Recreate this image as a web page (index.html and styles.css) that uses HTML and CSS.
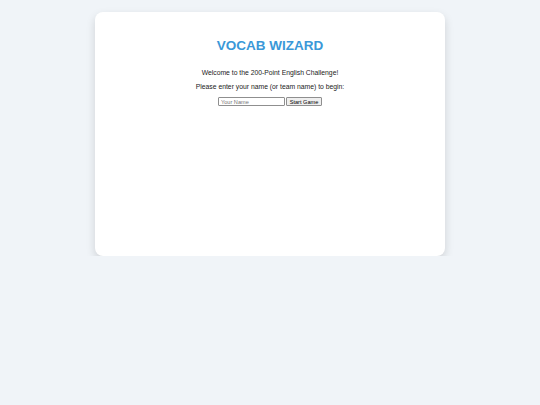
FILE: index.html
```html
<!DOCTYPE html>
<html>
<head>
<meta charset="utf-8">
<link rel="stylesheet" href="styles.css">
</head>
<body>
<div class="card">
  <h1 class="title">VOCAB WIZARD</h1>
  <p class="line">Welcome to the 200-Point English Challenge!</p>
  <p class="line">Please enter your name (or team name) to begin:</p>
  <div class="form">
    <input class="name" type="text" placeholder="Your Name">
    <button class="start">Start Game</button>
  </div>
</div>
</body>
</html>
```
FILE: styles.css
```css
html, body {
  margin: 0;
  padding: 0;
}
body {
  background: #f0f4f8;
  font-family: "Liberation Sans", Arial, sans-serif;
  color: #333;
  padding-top: 12px;
}
.card {
  width: 350px;
  height: 244px;
  box-sizing: border-box;
  margin: 0 auto;
  background: #fff;
  border-radius: 8px;
  box-shadow: 0 4px 10px rgba(0, 0, 0, 0.14);
  padding: 25px 10px 10px;
  text-align: center;
}
.title {
  margin: 0 0 14px;
  font-size: 13.5px;
  line-height: 18px;
  color: #3a98d8;
  font-weight: bold;
}
.line {
  margin: 0 0 6px;
  font-size: 6.8px;
  line-height: 8px;
  color: #222;
}
.form {
  display: flex;
  justify-content: center;
  gap: 1px;
  margin-top: 6px;
}
.name {
  width: 67px;
  height: 9px;
  box-sizing: border-box;
  font-family: inherit;
  font-size: 5.6px;
  padding: 0 2px;
  border: 1px solid #8f8f8f;
  border-radius: 1px;
  margin: 0;
}
.start {
  width: 36px;
  height: 9px;
  box-sizing: border-box;
  font-family: inherit;
  font-size: 5.6px;
  padding: 0;
  line-height: 6px;
  border: 1px solid #8f8f8f;
  border-radius: 1px;
  background: #efefef;
  margin: 0;
  color: #000;
}
```
